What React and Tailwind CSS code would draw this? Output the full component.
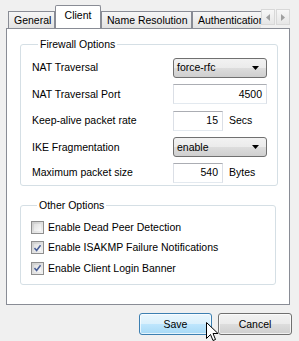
import React from "react";

const Tab = ({ label, selected, className = "" }) => (
  <div
    className={
      selected
        ? `relative z-10 h-[24px] -mb-px bg-white border border-b-0 border-[#898c95] rounded-t-[2px] flex items-start pt-[3px] justify-center ${className}`
        : `h-[17px] border border-b-0 border-[#898c95] bg-gradient-to-b from-[#f6f6f6] to-[#e3e3e3] flex items-center pl-[5px] whitespace-nowrap overflow-hidden ${className}`
    }
  >
    {label}
  </div>
);

const ArrowBtn = ({ dir }) => (
  <div className="w-[14px] h-[16px] border border-[#d8d8d8] bg-gradient-to-b from-[#f7f7f7] to-[#e6e6e6] flex items-center justify-center">
    <svg width="4" height="7" viewBox="0 0 4 7">
      {dir === "left" ? (
        <path d="M4 0 L0 3.5 L4 7 Z" fill="#a0a0a0" />
      ) : (
        <path d="M0 0 L4 3.5 L0 7 Z" fill="#a0a0a0" />
      )}
    </svg>
  </div>
);

const Combo = ({ value }) => (
  <div className="w-[94px] h-[20px] border border-[#707070] rounded-[3px] flex items-center justify-between pl-[3px] pr-[7px] bg-[linear-gradient(to_bottom,#f2f2f2_0%,#ebebeb_50%,#dddddd_50%,#cfcfcf_100%)]">
    <span>{value}</span>
    <svg width="7" height="4" viewBox="0 0 7 4">
      <path d="M0 0 L7 0 L3.5 4 Z" fill="#000" />
    </svg>
  </div>
);

const TextBox = ({ value, w }) => (
  <div
    className={`${w} h-[20px] border border-[#abadb3] border-l-[#dbdfe6] border-r-[#dbdfe6] border-b-[#e3e9ef] bg-white flex items-center justify-end pr-[4px]`}
  >
    {value}
  </div>
);

const Row = ({ label, h, children }) => (
  <div className={`${h} flex items-center`}>
    <span className="w-[141px]">{label}</span>
    {children}
  </div>
);

const Check = ({ checked, label }) => (
  <div className="h-[20.5px] flex items-center">
    <div className="w-[13px] h-[13px] border border-[#8f8f8f] bg-gradient-to-br from-[#cbcbcb] to-[#f4f4f4] p-[2px] flex items-center justify-center">
      <div className="w-full h-full bg-gradient-to-br from-[#e0e0e0] to-[#fafafa] flex items-center justify-center">
        {checked && (
          <svg width="8" height="8" viewBox="0 0 8 8">
            <path d="M0.5 4 L3 6.8 L7.5 0.8" stroke="#4a5f97" strokeWidth="1.8" fill="none" />
          </svg>
        )}
      </div>
    </div>
    <span className="ml-[4px]">{label}</span>
  </div>
);

export default function App() {
  return (
    <div className="relative w-[299px] h-[341px] overflow-hidden bg-[#f0f0f0] text-[10.5px] leading-[13px] text-black font-['Liberation_Sans',Arial,sans-serif]">
      {/* tab strip */}
      <div className="flex items-end h-[28px] pl-[8px]">
        <div className="flex items-end w-[253px] overflow-hidden">
          <Tab label="General" className="w-[47px] shrink-0" />
          <Tab label="Client" selected className="w-[46px] shrink-0" />
          <Tab label="Name Resolution" className="w-[91px] shrink-0" />
          <Tab label="Authentication" className="w-[86px] shrink-0" />
        </div>
        <div className="flex gap-px self-start mt-[9px]">
          <ArrowBtn dir="left" />
          <ArrowBtn dir="right" />
        </div>
      </div>

      {/* tab panel */}
      <div className="mx-[6px] w-[284px] h-[277px] border border-[#898c95] bg-white px-[13px] pt-[9px]">
        <fieldset className="border border-[#d5dfe5] rounded-[3px] pl-[11px] pr-[10px] pb-0">
          <legend className="ml-[6px] px-[2px]">Firewall Options</legend>
          <div className="pt-[3px]">
            <Row label="NAT Traversal" h="h-[27px]">
              <Combo value="force-rfc" />
            </Row>
            <Row label="NAT Traversal Port" h="h-[26px]">
              <TextBox value="4500" w="w-[94px]" />
            </Row>
            <Row label="Keep-alive packet rate" h="h-[27px]">
              <TextBox value="15" w="w-[50px]" />
              <span className="ml-[6px]">Secs</span>
            </Row>
            <Row label="IKE Fragmentation" h="h-[26px]">
              <Combo value="enable" />
            </Row>
            <Row label="Maximum packet size" h="h-[25px]">
              <TextBox value="540" w="w-[50px]" />
              <span className="ml-[6px]">Bytes</span>
            </Row>
          </div>
        </fieldset>

        <fieldset className="mt-[13px] border border-[#d5dfe5] rounded-[3px] pl-[10px] pb-[5px]">
          <legend className="ml-[6px] px-[2px]">Other Options</legend>
          <div className="pt-[5px]">
            <Check label="Enable Dead Peer Detection" />
            <Check checked label="Enable ISAKMP Failure Notifications" />
            <Check checked label="Enable Client Login Banner" />
          </div>
        </fieldset>
      </div>

      {/* buttons */}
      <div className="flex justify-end gap-[6px] pr-[7px] mt-[8px]">
        <button className="w-[73px] h-[22px] rounded-[3px] border border-[#3c7fb1] shadow-[inset_0_0_0_1px_#ffffffb0] bg-[linear-gradient(to_bottom,#eaf6fd_0%,#d9f0fc_50%,#bee6fd_50%,#a7d9f5_100%)]">
          Save
        </button>
        <button className="w-[74px] h-[22px] rounded-[3px] border border-[#707070] shadow-[inset_0_0_0_1px_#ffffffb0] bg-[linear-gradient(to_bottom,#f2f2f2_0%,#ebebeb_50%,#dddddd_50%,#cfcfcf_100%)]">
          Cancel
        </button>
      </div>

      {/* mouse cursor */}
      <svg className="absolute left-[206px] top-[322px]" width="13" height="20" viewBox="0 0 13 20">
        <path
          d="M0.5 0.5 L0.5 16.5 L4.5 12.5 L7 18.5 L9.5 17.5 L7 11.5 L12 11.5 Z"
          fill="#fff"
          stroke="#000"
          strokeWidth="1"
        />
      </svg>
    </div>
  );
}
